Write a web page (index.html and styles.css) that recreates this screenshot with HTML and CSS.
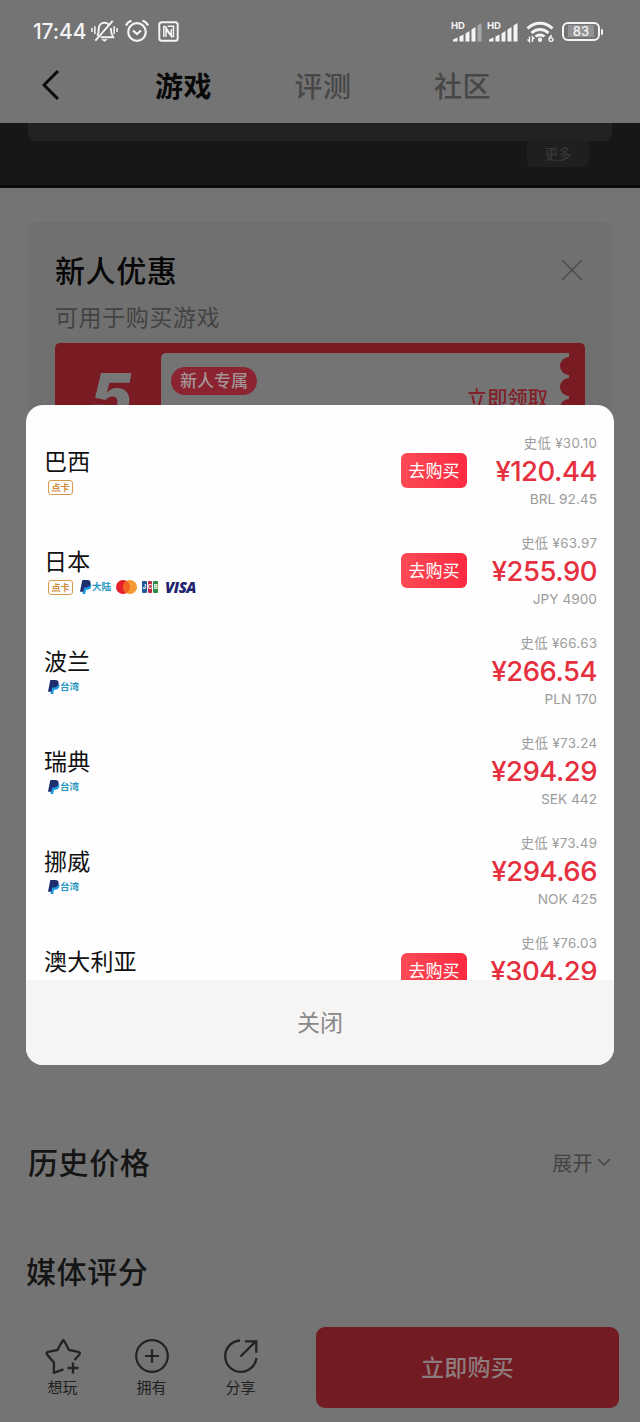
FILE: index.html
```html
<!DOCTYPE html>
<html lang="zh-CN">
<head>
<meta charset="utf-8">
<title>游戏价格</title>
<link rel="stylesheet" href="styles.css">
</head>
<body>
<svg class="defs" aria-hidden="true">
  <symbol id="paypal" viewBox="0 0 12 14">
    <path d="M4 3h5.200c2 .5 2.500 2 2 3.800-.5 2-2 2.900-4 2.900H6L5.200 14H2.600z" fill="#1a9be0"/>
    <path d="M2.300 0h5c2.500 0 3.700 1.400 3.200 3.700C10 6.300 8.300 7.400 5.800 7.400H4.200L3.300 11.800H0z" fill="#1d2f6f"/>
  </symbol>
  <symbol id="signal" viewBox="0 0 30 20">
    <path d="M0 19.500v-2l4.500-2v4zM6.500 19.500v-5L10.500 12.500v7zM12.500 19.500v-8L16.500 9v10.500zM18.500 19.500V7.500L22.500 5v14.500z"/>
  </symbol>
</svg>
<div class="phone">
  <header class="status">
    <span class="clock">17:44</span>
    <svg class="bell" viewBox="0 0 28 24" fill="none" stroke="#f4f4f4" stroke-width="2">
      <path d="M6.500 17c1.500-2 1.500-4 1.500-7 0-4 2.500-6.500 6-6.500 1.800 0 3.200.6 4.300 1.800M20.500 9c0 5 .5 6.500 2.500 9.500H10M4.500 22L22.500 1.500"/>
      <path d="M10.500 20.500h7l-3.500 2.700z" fill="#f4f4f4" stroke="none"/>
      <path d="M1 9v4M4 7v8M24 7v8M27 9v4" stroke-width="1.600"/>
    </svg>
    <svg class="alarm" viewBox="0 0 24 24" fill="none" stroke="#f4f4f4" stroke-width="2.200">
      <circle cx="12" cy="13" r="8.800"/><path d="M8 11.500l4 3.500 4-3.500M1 6.500C2 4 4 2.500 6.500 1.800M23 6.500c-1-2.500-3-4-5.500-4.700"/>
    </svg>
    <svg class="nfc" viewBox="0 0 21 21" fill="none" stroke="#f4f4f4" stroke-width="2">
      <rect x="1.300" y="1.300" width="18.400" height="18.400" rx="2.500"/><path d="M5.800 16V5.500h1.500l6 9.500V8M9.500 5.300h6V15.500h-2L8 8.500V16" stroke-width="1.500"/>
    </svg>
    <div class="status-right">
      <div class="net"><span class="hd">HD</span><svg class="bars" viewBox="0 0 30 20"><use href="#signal" fill="#f4f4f4"/><path d="M24.500 19.500V3.500L28.500 1v18.500z" fill="#a6a6a6"/></svg></div>
      <div class="net"><span class="hd">HD</span><svg class="bars" viewBox="0 0 30 20"><use href="#signal" fill="#f4f4f4"/><path d="M24.500 19.500V3.500L28.500 1v18.500z" fill="#f4f4f4"/></svg></div>
      <svg class="wifi" viewBox="0 0 28 22" fill="none" stroke="#f4f4f4" stroke-width="2.800">
        <path d="M1.500 7.500C8.500.5 19.500.5 26.500 7.500M5.500 12c4.800-4.700 12.200-4.700 17 0M9.500 15.500c2.500-2 6.500-2 9 0"/>
        <circle cx="14" cy="18.800" r="1.200" stroke-width="2"/>
        <path d="M3.500 15.500v5l-2-2M6.500 21v-5l2 2M26 14.500c-2.500.7-3.200 3-2.800 4.500.5 2 3.800 1.800 3.800-.3 0-2-2.800-2.400-3.800-.7" stroke-width="1.400"/>
      </svg>
      <div class="battery"><span>83</span></div>
    </div>
  </header>
  <nav class="nav">
    <svg class="back" viewBox="0 0 18 30" fill="none" stroke="#0b0b0b" stroke-width="3"><path d="M16 1L2 15l14 14"/></svg>
    <span class="tab active">游戏</span><span class="tab">评测</span><span class="tab">社区</span>
  </nav>
  <main class="content">
    <section class="hero"><div class="hero-panel"></div><div class="more">更多</div></section>
    <section class="offer">
      <div class="offer-head">
        <h2>新人优惠</h2>
        <svg class="close-x" viewBox="0 0 20 20" stroke="#4c4c4c" stroke-width="1.500"><path d="M0 0l20 20M20 0L0 20"/></svg>
      </div>
      <p class="offer-sub">可用于购买游戏</p>
      <div class="coupon">
        <div class="amount">5</div>
        <div class="ticket">
          <span class="pill">新人专属</span>
          <span class="claim">立即领取</span>
          <div class="scallops"><i></i><i></i><i></i><i></i></div>
        </div>
      </div>
    </section>
    <section class="section history">
      <h2>历史价格</h2>
      <div class="expand">展开<svg viewBox="0 0 14 8" fill="none" stroke="#434343" stroke-width="1.500"><path d="M1 1l6 6 6-6"/></svg></div>
    </section>
    <section class="section media"><h2>媒体评分</h2></section>
  </main>
  <footer class="actions">
    <div class="action">
      <svg viewBox="0 0 36 36" fill="none" stroke="#242424" stroke-width="2.300" stroke-linejoin="round"><path d="M18.500 31.300L8.800 34.800 9 24.500C6 21 3.500 18.500 1.500 15.500c0-1 .5-1.500 1.500-1.700L12.500 12c1.500-3 3.500-7 5.800-10 2 2.500 4 7 5.700 10l9.500 1.800c1 .2 1.500.7 1.500 1.700-1.500 2.500-3.500 4.500-5.500 6.500"/><path d="M28 24.500v11M22.500 30h11"/></svg>
      <span>想玩</span>
    </div>
    <div class="action">
      <svg viewBox="0 0 36 36" fill="none" stroke="#242424" stroke-width="2.200"><circle cx="18" cy="18" r="15.800"/><path d="M18 11v14M11 18h14"/></svg>
      <span>拥有</span>
    </div>
    <div class="action">
      <svg viewBox="0 0 36 36" fill="none" stroke="#242424" stroke-width="2.300"><path d="M17 2.500A15.700 15.700 0 1 0 33.500 20M17.500 18.500L33 3M22 3.300h11.300v11.500"/></svg>
      <span>分享</span>
    </div>
    <div class="buy-now">立即购买</div>
  </footer>
  <div class="dialog">
    <div class="list">
      <div class="row">
        <div class="region"><div class="name">巴西</div><div class="pays"><span class="card-tag">点卡</span></div></div>
        <div class="buy">去购买</div>
        <div class="prices"><span class="low">史低 ¥30.10</span><strong>¥120.44</strong><span class="orig">BRL 92.45</span></div>
      </div>
      <div class="row">
        <div class="region"><div class="name">日本</div><div class="pays"><span class="card-tag">点卡</span><span class="pp"><svg><use href="#paypal"/></svg>大陆</span>
          <svg class="mc" viewBox="0 0 21 14"><circle cx="7" cy="7" r="7" fill="#e5202b"/><circle cx="14" cy="7" r="7" fill="#f59a32"/><path d="M10.500 1a7 7 0 0 1 0 12 7 7 0 0 1 0-12" fill="#f26322"/></svg>
          <span class="jcb"><b>J</b><b>C</b><b>B</b></span><span class="visa">VISA</span></div></div>
        <div class="buy">去购买</div>
        <div class="prices"><span class="low">史低 ¥63.97</span><strong>¥255.90</strong><span class="orig">JPY 4900</span></div>
      </div>
      <div class="row">
        <div class="region"><div class="name">波兰</div><div class="pays"><span class="pp"><svg><use href="#paypal"/></svg>台湾</span></div></div>
        <div class="prices"><span class="low">史低 ¥66.63</span><strong>¥266.54</strong><span class="orig">PLN 170</span></div>
      </div>
      <div class="row">
        <div class="region"><div class="name">瑞典</div><div class="pays"><span class="pp"><svg><use href="#paypal"/></svg>台湾</span></div></div>
        <div class="prices"><span class="low">史低 ¥73.24</span><strong>¥294.29</strong><span class="orig">SEK 442</span></div>
      </div>
      <div class="row">
        <div class="region"><div class="name">挪威</div><div class="pays"><span class="pp"><svg><use href="#paypal"/></svg>台湾</span></div></div>
        <div class="prices"><span class="low">史低 ¥73.49</span><strong>¥294.66</strong><span class="orig">NOK 425</span></div>
      </div>
      <div class="row">
        <div class="region"><div class="name">澳大利亚</div><div class="pays"></div></div>
        <div class="buy">去购买</div>
        <div class="prices"><span class="low">史低 ¥76.03</span><strong>¥304.29</strong></div>
      </div>
    </div>
    <div class="dismiss">关闭</div>
  </div>
</div>
</body>
</html>
```
FILE: styles.css
```css
* { box-sizing: border-box; }
body { margin: 0; background: #747474; font-family: Inter, "Noto Sans CJK SC", sans-serif; }
h2, p { margin: 0; }
svg { display: block; flex: none; }
.defs { position: absolute; width: 0; height: 0; }
.phone { position: relative; width: 640px; height: 1422px; overflow: hidden; display: flex; flex-direction: column; background: #747474; }

.status { height: 62px; flex: none; display: flex; align-items: center; padding: 0 40px 0 33px; color: #f4f4f4; }
.clock { width: 58px; padding-top: 1px; font: 500 21px/24px Inter, sans-serif; letter-spacing: -.1px; white-space: nowrap; }
.bell { width: 27px; height: 24px; }
.alarm { width: 24px; height: 24px; margin-left: 7px; }
.nfc { width: 21px; height: 21px; margin-left: 9px; }
.status-right { margin-left: auto; display: flex; align-items: center; }
.net { width: 30px; height: 21px; margin-right: 6px; position: relative; }
.hd { position: absolute; left: -2px; top: 0; font: 700 9.500px/9px Inter, sans-serif; }
.bars { width: 30px; height: 20px; margin-top: 1px; }
.wifi { width: 28px; height: 22px; margin: 1px 8px 0 1px; }
.battery { position: relative; width: 38px; height: 19px; border: 2px solid #f4f4f4; border-radius: 6px; display: flex; align-items: center; justify-content: center; font: 500 13px/14px Inter, sans-serif; }
.battery span { background: #929292; padding: 0 5px; height: 12px; line-height: 12px; }
.battery::after { content: ""; position: absolute; right: -5px; top: 5px; width: 2px; height: 6px; border-radius: 1px; background: #f4f4f4; }

.nav { height: 61px; flex: none; display: flex; align-items: center; padding: 0 0 15px 42px; }
.back { width: 18px; height: 30px; margin-right: 95px; }
.tab { width: 57px; margin-right: 82.500px; padding-top: 3px; font-size: 28px; line-height: 36px; font-weight: 500; letter-spacing: .4px; color: #474747; white-space: nowrap; }
.tab.active { color: #090909; font-weight: 700; }

.content { height: 1187px; flex: none; overflow: hidden; }
.hero { height: 65px; background: #171717; border-bottom: 3px solid #0b0b0b; }
.hero-panel { height: 18px; margin: 0 28px; background: #222; border-radius: 0 0 7px 7px; }
.more { width: 62px; height: 26px; margin-left: 527px; border-radius: 0 0 5px 5px; background: #1f1f1f; color: #3a3a3a; font-size: 13.500px; line-height: 27px; text-align: center; }
.offer { margin: 34px 28px 0; height: 600px; padding: 26px 27px; border-radius: 8px; background: #707070; }
.offer-head { display: flex; justify-content: space-between; align-items: center; height: 44px; }
.offer h2 { padding-top: 1px; font-size: 30px; line-height: 44px; font-weight: 500; letter-spacing: .6px; color: #070707; }
.close-x { width: 20px; height: 20px; margin-right: 3px; }
.offer-sub { margin-top: 7px; padding-top: 1px; height: 36px; font-size: 23px; line-height: 36px; letter-spacing: .6px; color: #434343; }
.coupon { width: 530px; height: 150px; margin-top: 8px; border-radius: 5px; background: #781b23; display: flex; padding: 10px 16px 10px 0; }
.amount { width: 106px; padding-left: 6px; text-align: center; font: italic 900 62px/85px Inter, sans-serif; color: #777; }
.ticket { position: relative; flex: 1; display: flex; align-items: flex-start; justify-content: space-between; padding: 14px 21px 0 10px; border-radius: 5px 0 0 5px; background: #747474; }
.pill { width: 86px; height: 28px; border-radius: 14px; background: #8b2430; color: #a39496; font-size: 17px; font-weight: 500; line-height: 29px; text-align: center; }
.claim { margin-top: 16px; font-size: 20.300px; line-height: 32px; font-weight: 500; color: #822029; }
.scallops { position: absolute; right: -9px; top: 4px; display: flex; flex-direction: column; gap: 3px; }
.scallops i { width: 18px; height: 18px; border-radius: 50%; background: #781b23; }
.section { height: 44px; display: flex; justify-content: space-between; align-items: center; padding: 0 29px 0 28px; }
.section h2 { padding-top: 1px; font-size: 30px; line-height: 44px; font-weight: 500; letter-spacing: .6px; color: #151515; }
.history { margin-top: 318px; }
.media { margin-top: 65px; padding-left: 26px; }
.expand { display: flex; align-items: center; gap: 4px; font-size: 20px; letter-spacing: .4px; color: #434343; }
.expand svg { width: 14px; height: 8px; }

.actions { height: 112px; flex: none; display: flex; padding: 17px 21px 14px 18px; border-top: 1px solid #707070; }
.action { width: 89px; display: flex; flex-direction: column; align-items: center; padding-top: 10px; }
.action svg { width: 36px; height: 36px; }
.action span { margin-top: 2px; font-size: 15px; line-height: 24px; color: #202020; }
.buy-now { width: 303px; height: 81px; margin: -1px 0 0 auto; border-radius: 9px; background: #731b22; color: #8d7b7d; font-size: 23px; font-weight: 500; letter-spacing: .2px; line-height: 83px; text-align: center; }

.dialog { position: absolute; left: 26px; top: 405px; width: 588px; height: 660px; border-radius: 17px; overflow: hidden; background: #fefefe; }
.list { height: 575px; padding: 16px 17px 0 18px; overflow: hidden; }
.row { height: 100px; display: flex; align-items: center; }
.region { flex: 1; }
.name { height: 31px; padding-top: 1px; font-size: 23px; line-height: 31px; color: #111; letter-spacing: .2px; }
.pays { height: 18px; margin-top: 1px; display: flex; align-items: center; padding-left: 4px; }
.card-tag { width: 25px; height: 15px; border: 1px solid #db9850; border-radius: 3px; color: #d18a3c; font-size: 9px; font-weight: 700; line-height: 13px; text-align: center; margin-right: 7px; }
.pp { display: flex; align-items: center; color: #2597c0; font-size: 9.500px; font-weight: 700; line-height: 14px; }
.pp svg { width: 12px; height: 14px; }
.mc { width: 21px; height: 14px; margin-left: 5px; }
.jcb { display: flex; gap: 1px; margin-left: 5px; }
.jcb b { width: 4.700px; height: 12px; border-radius: 1px; background: #245a94; color: #fff; font: 700 6px/12px Inter, sans-serif; text-align: center; }
.jcb b:nth-child(2) { background: #bd2942; }
.jcb b:nth-child(3) { background: #2e8b45; }
.visa { margin-left: 7px; color: #22246e; font: italic 800 15px/14px "Open Sans", sans-serif; letter-spacing: -.5px; }
.buy { width: 66px; height: 35px; margin-top: -1px; border-radius: 6px; background: linear-gradient(90deg, #fb4b55, #fb2a40); color: #fff; font-size: 17px; line-height: 36px; text-align: center; }
.prices { width: 130px; height: 84px; display: flex; flex-direction: column; align-items: flex-end; white-space: nowrap; color: #9c9c9c; }
.low { font-size: 13.300px; line-height: 29px; height: 28px; letter-spacing: .35px; margin-right: -.35px; }
.prices strong { font-size: 27.500px; line-height: 28px; font-weight: 500; letter-spacing: -.5px; color: #e6303f; }
.orig { font-size: 13.700px; line-height: 28px; }
.dismiss { height: 85px; background: #f6f5f3; color: #888; font-size: 23px; line-height: 86px; text-align: center; }
```
